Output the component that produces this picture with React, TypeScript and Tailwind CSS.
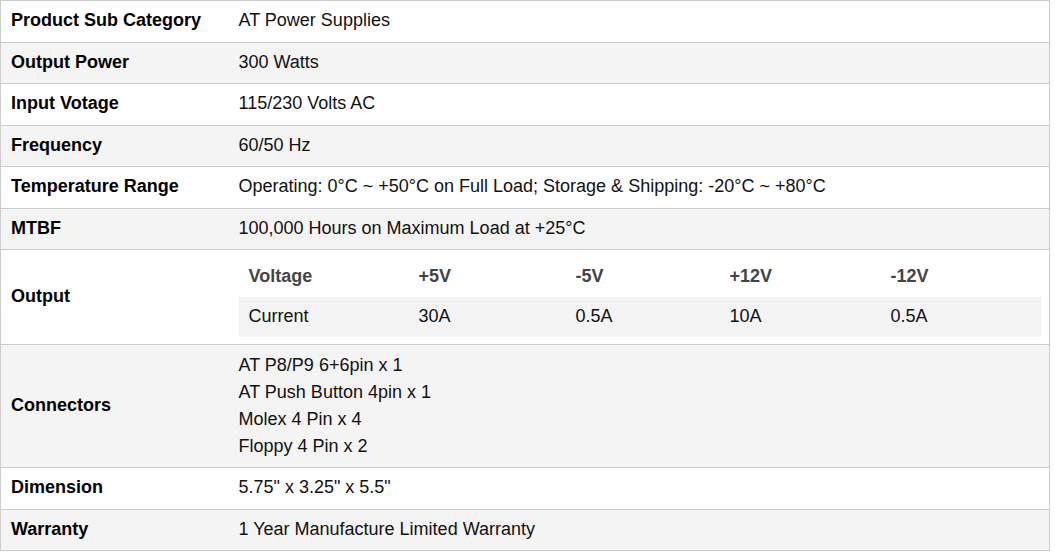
import React from "react";

const rows: { label: string; value: React.ReactNode; kind?: "output" | "connectors" }[] = [
  { label: "Product Sub Category", value: "AT Power Supplies" },
  { label: "Output Power", value: "300 Watts" },
  { label: "Input Votage", value: "115/230 Volts AC" },
  { label: "Frequency", value: "60/50 Hz" },
  { label: "Temperature Range", value: "Operating: 0°C ~ +50°C on Full Load; Storage & Shipping: -20°C ~ +80°C" },
  { label: "MTBF", value: "100,000 Hours on Maximum Load at +25°C" },
  { label: "Output", value: null, kind: "output" },
  { label: "Connectors", value: null, kind: "connectors" },
  { label: "Dimension", value: '5.75" x 3.25" x 5.5"' },
  { label: "Warranty", value: "1 Year Manufacture Limited Warranty" },
];

function OutputTable() {
  return (
    <table className="border-collapse w-[802px] table-fixed">
      <colgroup>
        <col className="w-[170px]" />
        <col className="w-[157px]" />
        <col className="w-[154px]" />
        <col className="w-[161px]" />
        <col className="w-[160px]" />
      </colgroup>
      <tbody>
        <tr className="h-[40px] bg-white">
          {["Voltage", "+5V", "-5V", "+12V", "-12V"].map((t) => (
            <td key={t} className="px-[10px] pt-0 pb-[2px] font-bold text-[#444444] leading-[20px] align-middle">
              {t}
            </td>
          ))}
        </tr>
        <tr className="h-[40px] bg-[#f4f4f4]">
          {["Current", "30A", "0.5A", "10A", "0.5A"].map((t, i) => (
            <td key={i} className="px-[10px] pt-0 pb-[2px] text-[#111111] leading-[20px] align-middle">
              {t}
            </td>
          ))}
        </tr>
      </tbody>
    </table>
  );
}

export default function App() {
  return (
    <div className="bg-white w-[1055px] h-[557px]" style={{ fontFamily: '"Liberation Sans", Arial, sans-serif' }}>
      <table className="border-collapse w-[1050px] table-fixed text-[18px] text-[#111111]">
        <colgroup>
          <col className="w-[228px]" />
          <col />
        </colgroup>
        <tbody>
          {rows.map((r, i) => (
            <tr key={r.label} className={i % 2 === 1 ? "bg-[#f4f4f4]" : "bg-white"}>
              <td className="border border-[#cccccc] border-r-0 pl-[10px] pr-[10px] pt-[9px] pb-[11px] leading-[20.5px] font-bold text-[#000000] align-middle whitespace-nowrap">
                {r.label}
              </td>
              <td
                className={
                  "border border-[#cccccc] border-l-0 px-[10px] align-middle " +
                  (r.kind === "output" ? "py-[7px] leading-[20px]" : r.kind === "connectors" ? "py-[7px] leading-[27px]" : "pt-[9px] pb-[11px] leading-[20.5px]")
                }
              >
                {r.kind === "output" ? (
                  <OutputTable />
                ) : r.kind === "connectors" ? (
                  <div className="flex flex-col">
                    <span>AT P8/P9 6+6pin x 1</span>
                    <span>AT Push Button 4pin x 1</span>
                    <span>Molex 4 Pin x 4</span>
                    <span>Floppy 4 Pin x 2</span>
                  </div>
                ) : (
                  r.value
                )}
              </td>
            </tr>
          ))}
        </tbody>
      </table>
    </div>
  );
}
